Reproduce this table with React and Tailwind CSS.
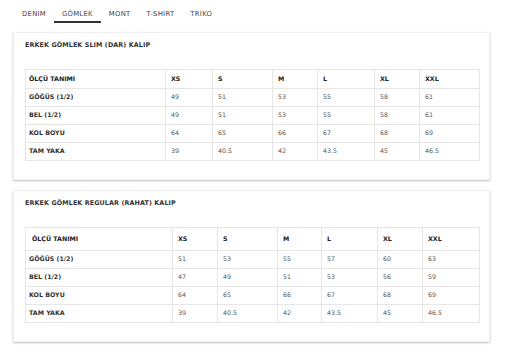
const tabs = ["DENIM", "GÖMLEK", "MONT", "T-SHIRT", "TRIKO"];

const sizes = ["XS", "S", "M", "L", "XL", "XXL"];

const charts = [
  {
    title: "ERKEK GÖMLEK SLIM (DAR) KALIP",
    cols: [140, 47, 60, 45, 57, 45, 60],
    headH: "h-[19px]",
    rows: [
      ["GÖĞÜS (1/2)", "49", "51", "53", "55", "58", "61"],
      ["BEL (1/2)", "49", "51", "53", "55", "58", "61"],
      ["KOL BOYU", "64", "65", "66", "67", "68", "69"],
      ["TAM YAKA", "39", "40.5", "42", "43.5", "45", "46.5"],
    ],
  },
  {
    title: "ERKEK GÖMLEK REGULAR (RAHAT) KALIP",
    cols: [147, 45, 60, 44, 56, 45, 57],
    headH: "h-[23px]",
    indent: true,
    rows: [
      ["GÖĞÜS (1/2)", "51", "53", "55", "57", "60", "63"],
      ["BEL (1/2)", "47", "49", "51", "53", "56", "59"],
      ["KOL BOYU", "64", "65", "66", "67", "68", "69"],
      ["TAM YAKA", "39", "40.5", "42", "43.5", "45", "46.5"],
    ],
  },
];

const SizeCard = ({ chart, top }) => (
  <div
    className={`ml-[13px] w-[477px] bg-white border border-[#f0f0f0] shadow-[0_1px_2px_rgba(0,0,0,0.25)] px-[11px] ${top}`}
  >
    <h2 className="h-[24px] text-[6.4px] font-bold text-[#333] tracking-[0.1px] leading-none flex items-center">
      {chart.title}
    </h2>
    <table className="mt-[12px] border-collapse table-fixed w-[454px] text-[6.3px] leading-none">
      <colgroup>
        {chart.cols.map((w, i) => (
          <col key={i} style={{ width: w }} />
        ))}
      </colgroup>
      <thead>
        <tr className={chart.headH}>
          <th
            className={`border border-[#e6e6e6] text-left font-bold text-[#222] ${
              chart.indent ? "pl-[6px]" : "pl-[3px]"
            }`}
          >
            ÖLÇÜ TANIMI
          </th>
          {sizes.map((s) => (
            <th
              key={s}
              className="border border-[#e6e6e6] text-left font-bold text-[#222] pl-[5px]"
            >
              {s}
            </th>
          ))}
        </tr>
      </thead>
      <tbody>
        {chart.rows.map((r) => (
          <tr key={r[0]} className="h-[18px]">
            {r.map((c, i) => (
              <td
                key={i}
                className={`border border-[#e6e6e6] ${
                  i === 0
                    ? "pl-[3px] font-bold text-[#333]"
                    : "pl-[5px] text-[#555]"
                }`}
              >
                {c}
              </td>
            ))}
          </tr>
        ))}
      </tbody>
    </table>
    <div className="h-[18px]" />
  </div>
);

export default function App() {
  return (
    <div
      className="w-[505px] h-[363px] bg-white overflow-hidden"
      style={{ fontFamily: '"DejaVu Sans", "Open Sans", sans-serif' }}
    >
      <nav className="flex items-start pl-[14px] pt-[6px] h-[32px]">
        {tabs.map((t) => (
          <div
            key={t}
            className={`px-[8px] h-[17px] flex items-center text-[6.8px] tracking-[0.3px] text-[#444] ${
              t === "GÖMLEK" ? "border-b-2 border-[#333] pt-[1px]" : ""
            }`}
          >
            {t}
          </div>
        ))}
      </nav>
      <SizeCard chart={charts[0]} top="" />
      <SizeCard chart={charts[1]} top="mt-[10px]" />
    </div>
  );
}
